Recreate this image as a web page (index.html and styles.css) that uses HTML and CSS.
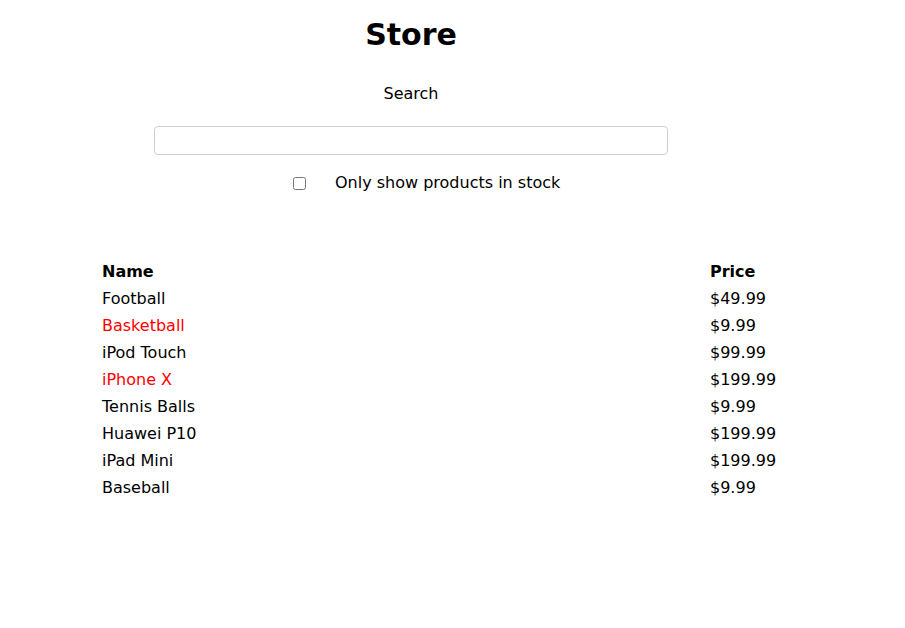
FILE: index.html
```html
<!DOCTYPE html>
<html>
<head>
<meta charset="utf-8">
<link rel="stylesheet" href="styles.css">
</head>
<body>
<div class="app">
  <h1 class="title">Store</h1>
  <label class="search-label" for="q">Search</label>
  <input class="search-input" id="q" type="text">
  <div class="stock-row">
    <input class="stock-check" type="checkbox" id="stock">
    <label class="stock-label" for="stock">Only show products in stock</label>
  </div>
  <table class="products">
    <thead>
      <tr><th class="col-name">Name</th><th>Price</th></tr>
    </thead>
    <tbody>
      <tr><td>Football</td><td>$49.99</td></tr>
      <tr><td class="out">Basketball</td><td>$9.99</td></tr>
      <tr><td>iPod Touch</td><td>$99.99</td></tr>
      <tr><td class="out">iPhone X</td><td>$199.99</td></tr>
      <tr><td>Tennis Balls</td><td>$9.99</td></tr>
      <tr><td>Huawei P10</td><td>$199.99</td></tr>
      <tr><td>iPad Mini</td><td>$199.99</td></tr>
      <tr><td>Baseball</td><td>$9.99</td></tr>
    </tbody>
  </table>
</div>
</body>
</html>
```

FILE: styles.css
```css
body {
  margin: 8px;
  font-family: "DejaVu Sans", sans-serif;
  font-size: 16px;
  color: #000;
  background: #fff;
}
.app {
  width: 806px;
  display: flow-root;
}
.title {
  margin: 7px 0 0;
  font-size: 30px;
  line-height: 40px;
  font-weight: bold;
  text-align: center;
}
.search-label {
  display: block;
  margin-top: 27px;
  line-height: 24px;
  text-align: center;
}
.search-input {
  display: block;
  box-sizing: border-box;
  width: 514px;
  height: 29px;
  margin: 20px auto 0;
  border: 1px solid #cfcfcf;
  border-radius: 4px;
  padding: 0 8px;
  font: inherit;
}
.stock-row {
  display: flex;
  align-items: center;
  margin-top: 16px;
  height: 24px;
  padding-left: 285px;
}
.stock-check {
  margin: 0;
  width: 13px;
  height: 13px;
}
.stock-label {
  margin-left: 29px;
  line-height: 24px;
}
.products {
  margin: 63px 0 0 94px;
  border-collapse: collapse;
}
.products th,
.products td {
  padding: 0;
  height: 27px;
  text-align: left;
  vertical-align: middle;
}
.products th {
  font-weight: bold;
}
.col-name {
  width: 608px;
}
.out {
  color: #ff0000;
}
```
